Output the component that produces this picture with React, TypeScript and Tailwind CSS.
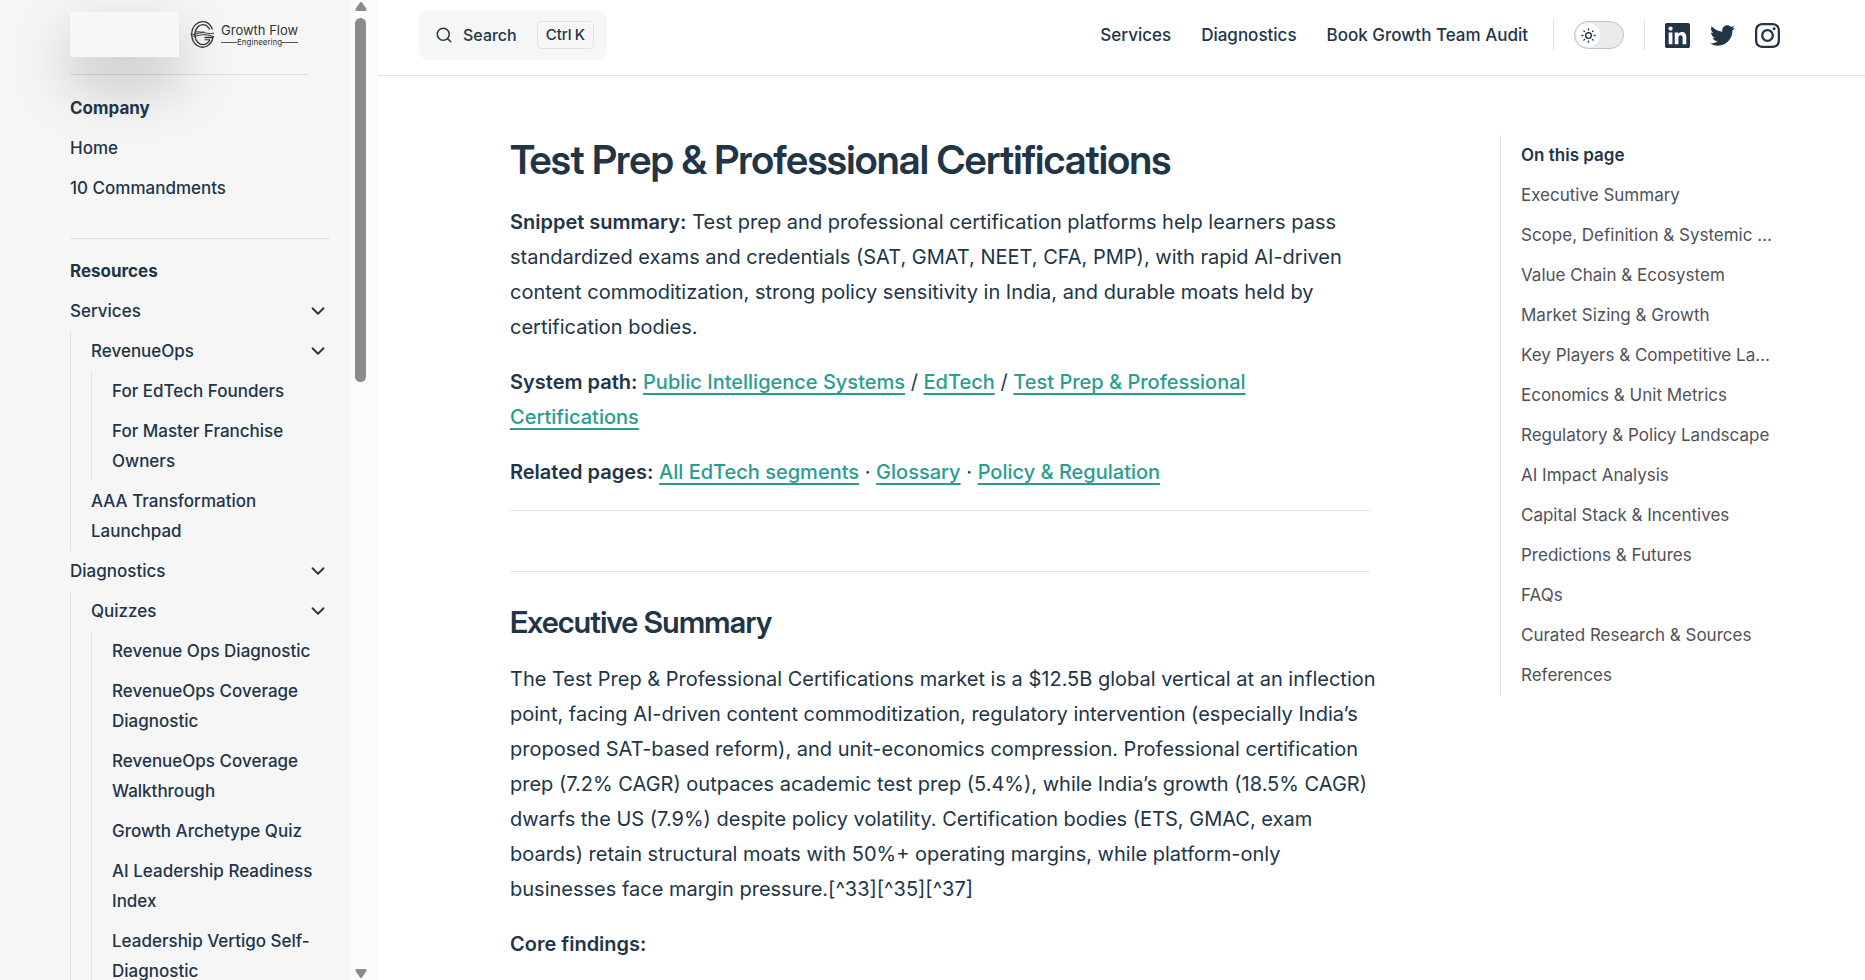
import { ChevronDown, Search } from "lucide-react";
import { FaTwitter } from "react-icons/fa";
import { SiInstagram } from "react-icons/si";

type Item = { text: string; items?: Item[] };

const resources: Item[] = [
  {
    text: "Services",
    items: [
      {
        text: "RevenueOps",
        items: [{ text: "For EdTech Founders" }, { text: "For Master Franchise Owners" }],
      },
      { text: "AAA Transformation Launchpad" },
    ],
  },
  {
    text: "Diagnostics",
    items: [
      {
        text: "Quizzes",
        items: [
          { text: "Revenue Ops Diagnostic" },
          { text: "RevenueOps Coverage Diagnostic" },
          { text: "RevenueOps Coverage Walkthrough" },
          { text: "Growth Archetype Quiz" },
          { text: "AI Leadership Readiness Index" },
          { text: "Leadership Vertigo Self-Diagnostic" },
        ],
      },
    ],
  },
];

const outline = [
  "Executive Summary",
  "Scope, Definition & Systemic …",
  "Value Chain & Ecosystem",
  "Market Sizing & Growth",
  "Key Players & Competitive La…",
  "Economics & Unit Metrics",
  "Regulatory & Policy Landscape",
  "AI Impact Analysis",
  "Capital Stack & Incentives",
  "Predictions & Futures",
  "FAQs",
  "Curated Research & Sources",
  "References",
];

function Logo() {
  return (
    <a href="/" className="flex items-center gap-1.5 font-normal text-[#333333]">
      <svg viewBox="0 0 26 28" className="h-7 w-[26px]" fill="none" stroke="currentColor" aria-hidden="true">
        <path d="M23.5 9.5A10.8 12.8 0 1 0 24 17.5H15.5" strokeWidth="1.3" />
        <path d="M20.8 9.5A8 10 0 1 0 20.8 19.8" strokeWidth="1.3" />
        <path d="M15.5 19.8H20.8" strokeWidth="1" />
        <path d="M1.5 14.2c5 1 8-1.600 12-1.600s6 1.800 11.500.6M4 16.200c5 0 8-1.800 12-1.500s6 1.200 9 2M7 12c3-.8 5 1 8-.200" strokeWidth="1" />
      </svg>
      <span className="flex flex-col">
        <span className="text-[13px] leading-4">Growth Flow</span>
        <span className="flex items-center text-[8px] leading-2">
          <span className="h-px grow bg-[#555555]" />
          Engineering
          <span className="h-px grow bg-[#555555]" />
        </span>
      </span>
    </a>
  );
}

function SidebarItem({ item }: { item: Item }) {
  if (!item.items) {
    return (
      <li className="py-[5px]">
        <a href="#" className="block">{item.text}</a>
      </li>
    );
  }
  return (
    <li>
      <button type="button" className="flex w-full items-center justify-between py-[5px] pr-px text-left">
        {item.text}
        <ChevronDown className="size-[22px]" strokeWidth={2} />
      </button>
      <ul className="border-l border-[#e2e2e3] pl-5">
        {item.items.map((child) => (
          <SidebarItem key={child.text} item={child} />
        ))}
      </ul>
    </li>
  );
}

function Sidebar() {
  return (
    <aside className="flex h-full shrink-0">
      <div className="w-[351px] overflow-hidden bg-[#f6f6f7] pl-[70px] pr-[21px] text-[17px] leading-[30px] font-medium">
        <div className="mr-[22px] flex h-[75px] items-center gap-[10px] border-b border-[#dcdcde] pb-[6px]">
          <div className="h-[45px] w-[109px] rounded-xs bg-[#f7f7f7] shadow-[0_25px_60px_rgba(0,0,0,0.25)]" />
          <Logo />
        </div>
        <nav aria-label="Sidebar">
          <section className="relative border-b border-[#e2e2e3] pt-[13px] pb-[30px]">
            <h2 className="py-[5px] font-bold">Company</h2>
            <ul>
              <SidebarItem item={{ text: "Home" }} />
              <SidebarItem item={{ text: "10 Commandments" }} />
            </ul>
          </section>
          <section className="pt-3">
            <h2 className="py-[5px] font-bold">Resources</h2>
            <ul>
              {resources.map((item) => (
                <SidebarItem key={item.text} item={item} />
              ))}
            </ul>
          </section>
        </nav>
      </div>
      {/* Scroll rail */}
      <div className="flex w-[27px] flex-col items-start bg-[#fcfcfc] pl-[3px]" aria-hidden="true">
        <svg viewBox="0 0 14 18" className="h-[18px] w-[14px] fill-[#8b8b8b]">
          <path d="M6 2.500Q7 1 8 2.500L12.500 9Q13 11 11.500 11H2.500Q1 11 1.500 9Z" />
        </svg>
        <div className="ml-px h-[364px] w-[11px] rounded-full bg-[#8b8b8b]" />
        <svg viewBox="0 0 14 12" className="mt-auto h-3 w-[14px] fill-[#8b8b8b]">
          <path d="M6 9.500Q7 11 8 9.500L12.500 3Q13 1 11.500 1H2.500Q1 1 1.500 3Z" />
        </svg>
      </div>
    </aside>
  );
}

function ThemeSwitch() {
  return (
    <button
      type="button"
      role="switch"
      aria-checked="false"
      aria-label="Switch to dark theme"
      className="flex h-7 w-[50px] items-center rounded-full border border-[#c2c2c4] bg-[#ebebed] px-px"
    >
      <span className="flex size-6 items-center justify-center rounded-full bg-white">
        <svg viewBox="0 0 24 24" className="size-[15px]" fill="none" stroke="currentColor" strokeWidth="2.200" strokeLinecap="round">
          <circle cx="12" cy="12" r="4.500" />
          <path d="M12 1.500v1.500M12 21v1.500M1.500 12H3M21 12h1.500M4.600 4.600l1 1M18.400 18.400l1 1M4.600 19.400l1-1M18.400 5.600l1-1" />
        </svg>
      </span>
    </button>
  );
}

function Navbar() {
  return (
    <header className="flex h-[76px] shrink-0 items-center justify-between border-b border-[#e2e2e3] pr-[85px] pb-[5px] pl-[41px] text-[17px] leading-[30px] font-medium">
      <button type="button" className="flex h-[50px] items-center rounded-[10px] bg-[#f6f6f7] pr-[13px] pl-4">
        <Search className="size-[18px]" strokeWidth={2} />
        <span className="ml-[10px] text-base">Search</span>
        <kbd className="ml-5 flex h-7 items-center gap-[3px] rounded-[5px] border border-[#e2e2e3] px-2 font-[Inter,sans-serif] text-[15px]">
          <span>Ctrl</span>
          <span>K</span>
        </kbd>
      </button>
      <div className="flex items-center">
        <nav className="flex gap-[30px]" aria-label="Main">
          <a href="#">Services</a>
          <a href="#">Diagnostics</a>
          <a href="#">Book Growth Team Audit</a>
        </nav>
        <div className="mr-5 ml-[25px] h-[30px] w-px bg-[#e2e2e3]" />
        <ThemeSwitch />
        <div className="mx-5 h-[30px] w-px bg-[#e2e2e3]" />
        <div className="flex items-center gap-5">
          <a href="#" aria-label="LinkedIn">
            <svg viewBox="0 0 24 24" className="size-[25px] fill-current">
              <path d="M20.447 20.452h-3.554v-5.569c0-1.328-.027-3.037-1.852-3.037-1.853 0-2.136 1.445-2.136 2.939v5.667H9.351V9h3.414v1.561h.046c.477-.9 1.637-1.850 3.370-1.850 3.601 0 4.267 2.370 4.267 5.455v6.286zM5.337 7.433a2.062 2.062 0 0 1-2.063-2.065 2.064 2.064 0 1 1 2.063 2.065zm1.782 13.019H3.555V9h3.564v11.452zM22.225 0H1.771C.792 0 0 .774 0 1.729v20.542C0 23.227.792 24 1.771 24h20.451C23.200 24 24 23.227 24 22.271V1.729C24 .774 23.200 0 22.222 0h.003z" />
            </svg>
          </a>
          <a href="#" aria-label="Twitter">
            <FaTwitter className="size-[25px]" />
          </a>
          <a href="#" aria-label="Instagram">
            <SiInstagram className="size-[25px]" />
          </a>
        </div>
      </div>
    </header>
  );
}

function DocLink({ children }: { children: string }) {
  return (
    <a href="#" className="font-medium text-[#2a9d8f] underline decoration-2 underline-offset-4">
      {children}
    </a>
  );
}

function Article() {
  return (
    <main className="max-w-[860px] grow">
      <h1 className="font-['Inter_Display',Inter,sans-serif] text-[40px] leading-[50px] font-semibold tracking-[-0.02em]">
        Test Prep & Professional Certifications
      </h1>
      <div className="text-xl leading-[35px]">
        <p className="mt-5">
          <strong className="font-semibold">Snippet summary:</strong> Test prep and professional certification
          platforms help learners pass standardized exams and credentials (SAT, GMAT, NEET, CFA, PMP), with rapid
          AI-driven content commoditization, strong policy sensitivity in India, and durable moats held by
          certification bodies.
        </p>
        <p className="mt-5">
          <strong className="font-semibold">System path:</strong> <DocLink>Public Intelligence Systems</DocLink> /{" "}
          <DocLink>EdTech</DocLink> / <DocLink>Test Prep & Professional Certifications</DocLink>
        </p>
        <p className="mt-5">
          <strong className="font-semibold">Related pages:</strong> <DocLink>All EdTech segments</DocLink> ·{" "}
          <DocLink>Glossary</DocLink> · <DocLink>Policy & Regulation</DocLink>
        </p>
        <hr className="mt-5 border-[#e2e2e3]" />
        <h2 className="mt-[60px] border-t border-[#e2e2e3] pt-[30px] font-['Inter_Display',Inter,sans-serif] text-[30px] leading-10 font-semibold tracking-[-0.02em]">
          Executive Summary
        </h2>
        <p className="-mr-3 mt-5">
          The Test Prep & Professional Certifications market is a $12.5B global vertical at an inflection point,
          facing AI-driven content commoditization, regulatory intervention (especially India’s proposed SAT-based
          reform), and unit-economics compression. Professional certification prep (7.2% CAGR) outpaces academic
          test prep (5.4%), while India’s growth (18.5% CAGR) dwarfs the US (7.9%) despite policy volatility.
          Certification bodies (ETS, GMAC, exam boards) retain structural moats with 50%+ operating margins, while
          platform-only businesses face margin pressure.[^33][^35][^37]
        </p>
        <p className="mt-5">
          <strong className="font-semibold">Core findings:</strong>
        </p>
      </div>
    </main>
  );
}

function Outline() {
  return (
    <nav aria-labelledby="outline-title" className="w-[280px] shrink-0 self-start border-l border-[#e2e2e3] pl-5 text-[17px] leading-10">
      <h2 id="outline-title" className="font-semibold">On this page</h2>
      <ul className="text-[#515158]">
        {outline.map((title) => (
          <li key={title}>
            <a href="#" className="block whitespace-nowrap">{title}</a>
          </li>
        ))}
      </ul>
    </nav>
  );
}

export default function App() {
  return (
    <div className="flex h-screen overflow-hidden bg-white font-[Inter,sans-serif] text-[#213547]">
      <Sidebar />
      <div className="flex min-w-0 grow flex-col">
        <Navbar />
        <div className="flex min-h-0 grow justify-between overflow-hidden pt-[59px] pr-[85px] pl-[132px]">
          <Article />
          <Outline />
        </div>
      </div>
    </div>
  );
}
